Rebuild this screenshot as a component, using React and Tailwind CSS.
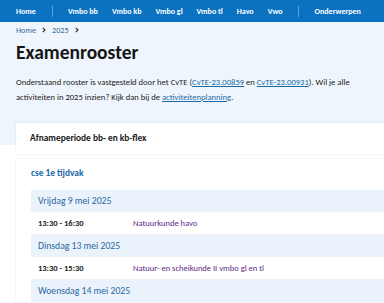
const navItems = ['Vmbo bb', 'Vmbo kb', 'Vmbo gl', 'Vmbo tl', 'Havo', 'Vwo'];

const days = [
  { date: 'Vrijdag 9 mei 2025', time: '13:30 - 16:30', subject: 'Natuurkunde havo' },
  { date: 'Dinsdag 13 mei 2025', time: '13:30 - 15:30', subject: 'Natuur- en scheikunde II vmbo gl en tl' },
  { date: 'Woensdag 14 mei 2025', time: null, subject: null },
];

const Chevron = () => (
  <svg width="4" height="6" viewBox="0 0 4 6" className="text-[#333]">
    <path d="M0.8 0.8 L3 3 L0.8 5.2" fill="none" stroke="currentColor" strokeWidth="1.2" />
  </svg>
);

export default function App() {
  return (
    <div className="w-[384px] h-[303px] overflow-hidden bg-white text-[#1a1a1a] [font-family:Carlito,sans-serif]">
      {/* Top nav */}
      <nav className="h-[22px] bg-[#0b72c1] flex items-center text-white text-[8px] font-bold whitespace-nowrap">
        <span className="ml-[16px]">Home</span>
        <span className="ml-[16px] w-px h-[11px] bg-white/35" />
        <div className="flex items-center gap-[14px] ml-[15px]">
          {navItems.map((item) => (
            <span key={item}>{item}</span>
          ))}
        </div>
        <span className="ml-[15px] w-px h-[11px] bg-white/35" />
        <span className="ml-[16px]">Onderwerpen</span>
      </nav>

      {/* Header area */}
      <div className="bg-[#eef5fc] h-[123px] pt-[1px]">
        <div className="px-[16px] text-[8.2px] text-[#3a6d9a] flex items-center gap-[6px] h-[14px]">
          <span>Home</span>
          <Chevron />
          <span>2025</span>
          <Chevron />
        </div>
        <h1 className="px-[16px] mt-[3px] text-[19.5px] font-bold leading-[24px] text-[#151515]">Examenrooster</h1>
        <p className="pl-[16px] pr-[30px] mt-[11px] text-[8.6px] leading-[14.5px] text-[#222]">
          Onderstaand rooster is vastgesteld door het CvTE (<a className="text-[#1a6aa8] underline">CvTE-23.00859</a> en{' '}
          <a className="text-[#1a6aa8] underline">CvTE-23.00931</a>). Wil je alle activiteiten in 2025 inzien? Kijk dan bij de{' '}
          <a className="text-[#1a6aa8] underline">activiteitenplanning</a>.
        </p>
      </div>

      {/* Cards */}
      <div className="pl-[16px] -mt-[22px] relative flex flex-col gap-[5px]">
        <div className="bg-white h-[31px] flex items-center pl-[14px] text-[9.4px] font-bold text-[#1a1a1a] shadow-[0_0_2px_rgba(0,0,0,0.1)]">
          Afnameperiode bb- en kb-flex
        </div>
        <div className="bg-white shadow-[0_0_2px_rgba(0,0,0,0.1)] pl-[15px] pt-[5px]">
          <div className="text-[9.4px] font-bold text-[#1a6aa8] h-[18px] flex items-center">cse 1e tijdvak</div>
          <div className="mt-[8px]">
            {days.map((d) => (
              <div key={d.date}>
                <div className="bg-[#eaf3fc] h-[22px] flex items-center pl-[7px] text-[9.7px] text-[#2b67a0]">{d.date}</div>
                {d.time && (
                  <div className="h-[23px] flex items-center pl-[7px] text-[8.5px] border-b border-[#f2f2f2]">
                    <span className="w-[95px] font-bold text-[#222]">{d.time}</span>
                    <span className="text-[#5b2a86]">{d.subject}</span>
                  </div>
                )}
              </div>
            ))}
          </div>
        </div>
      </div>
    </div>
  );
}
